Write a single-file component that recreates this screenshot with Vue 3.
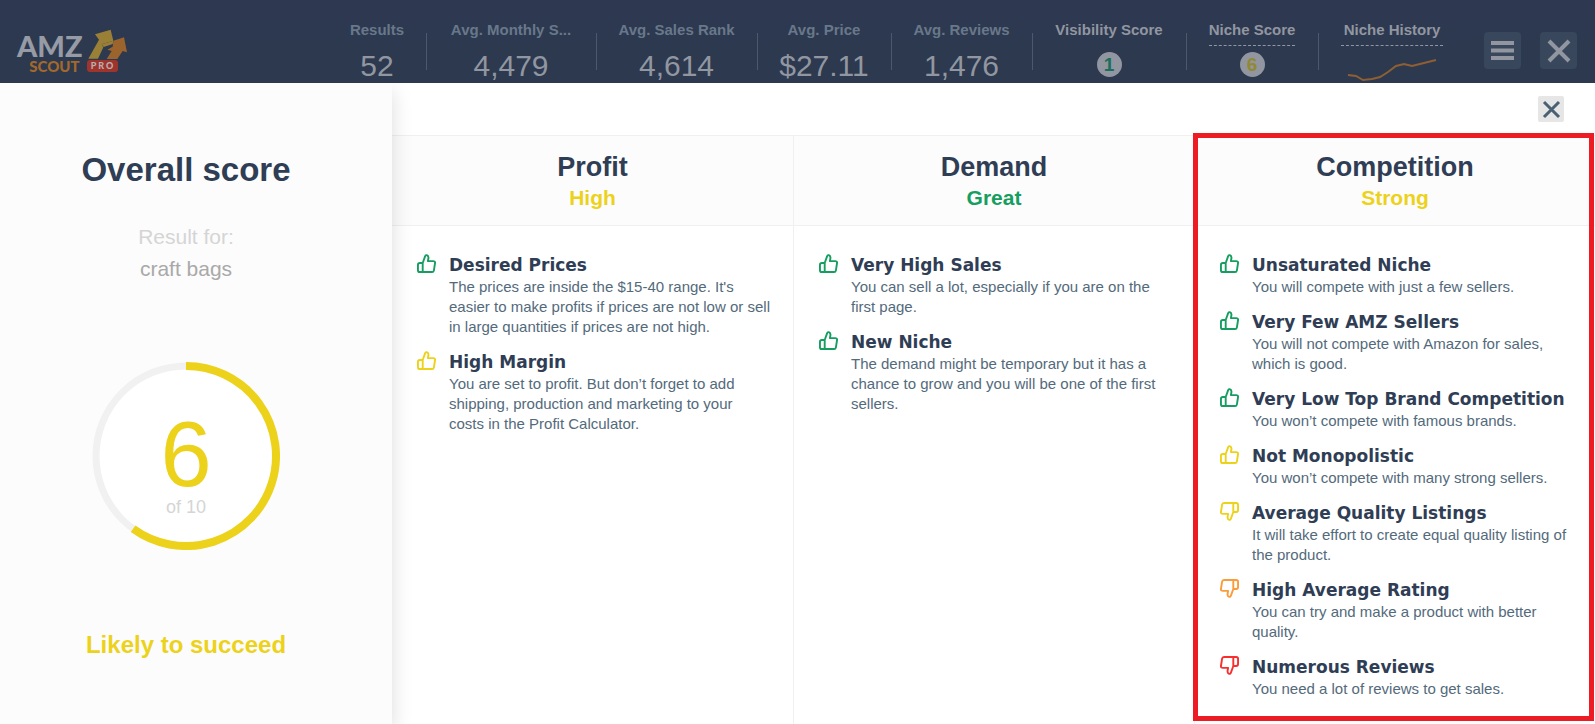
<template>
  <div class="page">
    <header class="topbar">
      <a class="logo" href="#" aria-label="AMZ Scout Pro">
        <span class="logo-text">
          <span class="logo-amz">AMZ</span>
          <span class="logo-scout">SCOUT</span>
        </span>
        <span class="logo-side">
          <svg class="logo-arrows" viewBox="0 0 120 92" aria-hidden="true">
            <path d="M4 90 36 33 24 17 71 3 79 36 44 47 49 56 33 90Z" fill="#9a7f36" />
            <path d="M79 36 111 26 120 71 107 67 91 91H59L74 67 61 63 77 54Z" fill="#9b642d" />
            <path d="M44 47 79 36 77 46 50 55Z" fill="#9a7f36" />
          </svg>
          <span class="logo-pro">PRO</span>
        </span>
      </a>

      <div class="stats">
        <div v-for="stat in stats" :key="stat.label" class="stat">
          <span class="stat-label">{{ stat.label }}</span>
          <span class="stat-value">{{ stat.value }}</span>
        </div>
        <div class="stat">
          <span class="stat-label bright">Visibility Score</span>
          <span class="badge badge-green">1</span>
        </div>
        <div class="stat">
          <a class="stat-label bright dashed" href="#">Niche Score</a>
          <span class="badge badge-yellow">6</span>
        </div>
        <div class="stat">
          <a class="stat-label bright dashed wide" href="#">Niche History</a>
          <svg class="sparkline" viewBox="0 0 90 24" aria-hidden="true">
            <polyline points="1,17 9,18 16,22 25,21 33,19 41,14 49,8 57,6 65,8 89,2" />
          </svg>
        </div>
      </div>

      <div class="topbar-actions">
        <button class="top-btn" type="button" aria-label="Menu">
          <svg viewBox="0 0 37 37"><path d="M7 11H30M7 18.500H30M7 26H30" stroke-width="4" /></svg>
        </button>
        <button class="top-btn" type="button" aria-label="Close">
          <svg viewBox="0 0 37 37"><path d="M9 9 29 29M29 9 9 29" stroke-width="4" /></svg>
        </button>
      </div>
    </header>

    <main class="content">
      <aside class="overall">
        <h1>Overall score</h1>
        <p class="result-label">Result for:</p>
        <p class="result-name">craft bags</p>
        <svg class="score" viewBox="0 0 188 188">
          <circle cx="94" cy="94" r="90" fill="#fff" stroke="#f1f1f1" stroke-width="7" />
          <path :d="scoreArc" fill="none" stroke="#edd21b" stroke-width="8" />
          <text class="score-value" x="94" y="124">{{ score }}</text>
          <text class="score-total" x="94" y="151">of 10</text>
        </svg>
        <p class="verdict">Likely to succeed</p>
      </aside>

      <section class="details">
        <div class="details-bar">
          <button class="close-btn" type="button" aria-label="Close details">
            <svg viewBox="0 0 26 26"><path d="M6 6 21 21M21 6 6 21" /></svg>
          </button>
        </div>
        <div class="columns">
          <article
            v-for="column in columns"
            :key="column.title"
            class="column"
            :class="{ highlighted: column.highlighted }"
          >
            <div class="column-head">
              <h2>{{ column.title }}</h2>
              <p class="rating" :class="column.color">{{ column.rating }}</p>
            </div>
            <ul class="items">
              <li v-for="item in column.items" :key="item.title" class="item">
                <svg class="thumb" :class="[item.color, { down: item.down }]" viewBox="0 0 20 20" aria-hidden="true">
                  <path d="M6 9.500 8.500 2.500C8.800 1.400 9.600 1 10.400 1.300 11.900 1.800 12.200 3.300 12 4.500L11.500 7.500H17C18.400 7.500 19.200 8.300 19 9.500L17.800 17.200C17.600 18.400 16.900 19 15.800 19H3C1.700 19 1 18.300 1 17V11.500C1 10.200 1.700 9.500 3 9.500H6V19" />
                </svg>
                <div>
                  <h3>{{ item.title }}</h3>
                  <p>{{ item.text }}</p>
                </div>
              </li>
            </ul>
          </article>
        </div>
      </section>
    </main>
  </div>
</template>

<script setup>
import { computed, ref } from 'vue'

const score = ref(6)

const stats = [
  { label: 'Results', value: '52' },
  { label: 'Avg. Monthly S...', value: '4,479' },
  { label: 'Avg. Sales Rank', value: '4,614' },
  { label: 'Avg. Price', value: '$27.11' },
  { label: 'Avg. Reviews', value: '1,476' }
]

const columns = [
  {
    title: 'Profit',
    rating: 'High',
    color: 'yellow',
    items: [
      {
        title: 'Desired Prices',
        text: "The prices are inside the $15-40 range. It's easier to make profits if prices are not low or sell in large quantities if prices are not high.",
        color: 'green'
      },
      {
        title: 'High Margin',
        text: 'You are set to profit. But don’t forget to add shipping, production and marketing to your costs in the Profit Calculator.',
        color: 'yellow'
      }
    ]
  },
  {
    title: 'Demand',
    rating: 'Great',
    color: 'green',
    items: [
      {
        title: 'Very High Sales',
        text: 'You can sell a lot, especially if you are on the first page.',
        color: 'green'
      },
      {
        title: 'New Niche',
        text: 'The demand might be temporary but it has a chance to grow and you will be one of the first sellers.',
        color: 'green'
      }
    ]
  },
  {
    title: 'Competition',
    rating: 'Strong',
    color: 'yellow',
    highlighted: true,
    items: [
      { title: 'Unsaturated Niche', text: 'You will compete with just a few sellers.', color: 'green' },
      { title: 'Very Few AMZ Sellers', text: 'You will not compete with Amazon for sales, which is good.', color: 'green' },
      { title: 'Very Low Top Brand Competition', text: 'You won’t compete with famous brands.', color: 'green' },
      { title: 'Not Monopolistic', text: 'You won’t compete with many strong sellers.', color: 'yellow' },
      { title: 'Average Quality Listings', text: 'It will take effort to create equal quality listing of the product.', color: 'yellow', down: true },
      { title: 'High Average Rating', text: 'You can try and make a product with better quality.', color: 'orange', down: true },
      { title: 'Numerous Reviews', text: 'You need a lot of reviews to get sales.', color: 'red', down: true }
    ]
  }
]

// arc runs clockwise from 12 o'clock
const scoreArc = computed(() => {
  const angle = (score.value / 10) * Math.PI * 2
  const x = 94 + 90 * Math.sin(angle)
  const y = 94 - 90 * Math.cos(angle)
  return `M94 4A90 90 0 ${score.value > 5 ? 1 : 0} 1 ${x} ${y}`
})
</script>

<style>
body {
  margin: 0;
}
</style>

<style scoped>
.page {
  display: flex;
  flex-direction: column;
  min-height: 100vh;
  background: #ffffff;
  font-family: "Liberation Sans", Arial, sans-serif;
}

h1,
h2,
h3,
p,
ul {
  margin: 0;
  padding: 0;
}

.topbar {
  display: flex;
  box-sizing: border-box;
  height: 83px;
  padding: 0 18px 0 17px;
  background: linear-gradient(#2e3951, #2c394e);
  overflow: hidden;
}

.logo {
  display: flex;
  gap: 4px;
  margin-top: 28px;
  height: 45px;
  text-decoration: none;
  font-family: Lato, "Liberation Sans", sans-serif;
  font-weight: 900;
}

.logo-text {
  display: flex;
  flex-direction: column;
  align-items: flex-end;
  padding-top: 4px;
}

.logo-amz {
  font-size: 29px;
  line-height: 28px;
  color: #969ba5;
}

.logo-scout {
  padding-right: 3px;
  font-size: 15px;
  line-height: 12px;
  color: #a3682b;
}

.logo-side {
  display: flex;
  flex-direction: column;
  align-items: flex-start;
}

.logo-arrows {
  width: 40px;
  height: 32px;
}

.logo-pro {
  width: 31px;
  border-radius: 3px;
  background: #9f342d;
  color: #b9afb2;
  font-size: 9px;
  line-height: 12px;
  letter-spacing: 2px;
  text-indent: 2px;
  text-align: center;
}

.stats {
  display: grid;
  grid-template-columns: 98px 170px 161px 134px 141px 154px 132px 148px;
  margin-left: auto;
}

.stat {
  position: relative;
  display: flex;
  flex-direction: column;
  align-items: center;
  padding-top: 20px;
}

.stat + .stat::before {
  content: "";
  position: absolute;
  left: 0;
  top: 33px;
  width: 1px;
  height: 37px;
  background: #4c586c;
}

.stat-label {
  height: 25px;
  font-size: 15px;
  font-weight: bold;
  line-height: 20px;
  color: #68788a;
  white-space: nowrap;
  text-decoration: none;
}

.stat-label.bright {
  color: #9196a0;
}

.stat-label.dashed {
  border-bottom: 1px dashed #9196a0;
}

.stat-label.wide {
  padding: 0 3px;
}

.stat-value {
  margin-top: 3px;
  font-size: 30px;
  line-height: 36px;
  color: #9196a0;
}

.badge {
  width: 25px;
  height: 25px;
  margin-top: 7px;
  border-radius: 50%;
  background: #9196a0;
  font-size: 19px;
  font-weight: bold;
  line-height: 25px;
  text-align: center;
}

.dashed + .badge {
  margin-top: 6px;
}

.badge-green {
  color: #1b6e5b;
}

.badge-yellow {
  color: #928932;
}

.sparkline {
  width: 90px;
  height: 24px;
  margin-top: 12px;
  fill: none;
  stroke: #8f5f34;
  stroke-width: 2;
}

.topbar-actions {
  display: flex;
  gap: 19px;
  margin: 32px 0 0 18px;
}

.top-btn {
  width: 37px;
  height: 37px;
  padding: 0;
  border: 0;
  border-radius: 4px;
  background: #39475d;
  cursor: pointer;
}

.top-btn svg,
.close-btn svg {
  display: block;
  width: 100%;
  height: 100%;
  fill: none;
  stroke: #9196a0;
}

.content {
  display: flex;
  flex: 1;
}

.overall {
  position: relative;
  z-index: 1;
  display: flex;
  flex-direction: column;
  align-items: center;
  box-sizing: border-box;
  flex: 0 0 392px;
  padding: 67px 20px 0 0;
  background: #fcfcfc;
  box-shadow: 0 8px 20px rgba(0, 0, 0, 0.14);
  clip-path: inset(0 -40px 0 0);
}

h1 {
  margin-bottom: 31px;
  font-size: 33px;
  line-height: 40px;
  color: #2f3d55;
}

.result-label,
.result-name {
  font-size: 21px;
  line-height: 32px;
  color: #d5d5d5;
}

.result-name {
  color: #a9a9a9;
}

.score {
  width: 188px;
  height: 188px;
  margin: 77px 0 79px;
  text-anchor: middle;
}

.score-value {
  font-size: 92px;
  fill: #edd21b;
}

.score-total {
  font-size: 18px;
  fill: #d5d5d5;
}

.verdict {
  font-size: 24px;
  font-weight: bold;
  line-height: 32px;
  color: #edd21b;
}

.details {
  display: flex;
  flex: 1;
  flex-direction: column;
}

.details-bar {
  display: flex;
  justify-content: flex-end;
  padding: 13px 31px 13px 0;
}

.close-btn {
  width: 26px;
  height: 26px;
  padding: 0;
  border: 0;
  border-radius: 2px;
  background: #e6e6e6;
  cursor: pointer;
}

.close-btn svg {
  stroke: #4a6073;
  stroke-width: 3;
}

.columns {
  display: grid;
  flex: 1;
  grid-template-columns: repeat(3, 1fr);
}

.column {
  position: relative;
}

.column + .column {
  border-left: 1px solid #f0f0f0;
}

.highlighted::after {
  content: "";
  position: absolute;
  inset: -2px 1px 3px -2px;
  border: 5px solid #ed1c24;
  pointer-events: none;
}

.column-head {
  padding: 15px 0 12px;
  border: 1px solid #f0f0f0;
  border-width: 1px 0;
  background: #fcfcfc;
  text-align: center;
}

h2 {
  font-size: 27px;
  line-height: 32px;
  color: #2f3d55;
}

.rating {
  font-size: 21px;
  font-weight: bold;
  line-height: 30px;
}

.green {
  color: #169e60;
}

.yellow {
  color: #edd21b;
}

.orange {
  color: #fb9c3a;
}

.red {
  color: #f5302f;
}

.items {
  display: flex;
  flex-direction: column;
  gap: 14px;
  padding: 28px 22px 0 25px;
  list-style: none;
}

.item {
  display: flex;
  gap: 13px;
}

.thumb {
  flex: none;
  width: 19px;
  height: 19px;
  fill: none;
  stroke: currentColor;
  stroke-width: 2;
  stroke-linejoin: round;
}

.thumb.down {
  transform: rotate(180deg);
}

h3 {
  font-family: "DejaVu Sans", "Liberation Sans", sans-serif;
  font-size: 17px;
  font-weight: bold;
  line-height: 23px;
  color: #2f3d55;
  white-space: nowrap;
}

.item p {
  font-size: 15px;
  line-height: 20px;
  color: #536a7b;
}
</style>
